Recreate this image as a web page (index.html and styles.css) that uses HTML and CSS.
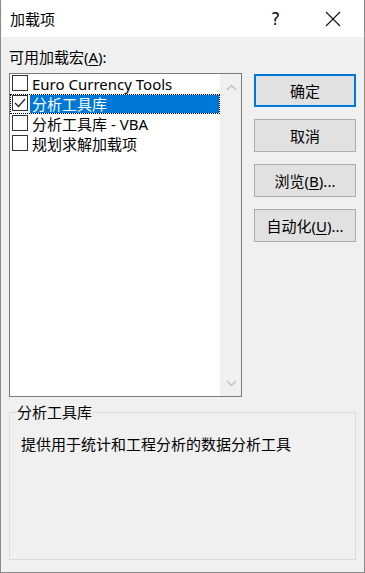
FILE: index.html
```html
<!DOCTYPE html>
<html lang="zh-CN">
<head>
<meta charset="utf-8">
<title>加载项</title>
<link rel="stylesheet" href="styles.css">
</head>
<body>
<div class="window">
  <div class="titlebar">
    <span class="title">加载项</span>
    <span class="help">?</span>
    <span class="close">
      <svg width="16" height="16" viewBox="0 0 16 16"><path d="M1 1 L15 15 M15 1 L1 15" stroke="#111" stroke-width="1.1" fill="none"/></svg>
    </span>
  </div>
  <div class="content">
    <div class="main">
      <div class="left">
        <div class="label">可用加载宏(<u>A</u>):</div>
        <div class="listbox">
          <div class="items">
            <div class="item"><span class="cb"></span><span class="text">Euro Currency Tools</span></div>
            <div class="item selected"><span class="cb"><svg width="14" height="14" viewBox="0 0 14 14"><polyline points="2,7 5.5,10.5 12,3" stroke="#222" stroke-width="1.2" fill="none"/></svg></span><span class="text">分析工具库</span></div>
            <div class="item"><span class="cb"></span><span class="text">分析工具库 - VBA</span></div>
            <div class="item"><span class="cb"></span><span class="text">规划求解加载项</span></div>
          </div>
          <div class="scrollbar">
            <svg width="11" height="7" viewBox="0 0 11 7"><polyline points="1,6 5.5,1.5 10,6" stroke="#c4c4c4" stroke-width="1.5" fill="none"/></svg>
            <svg width="11" height="7" viewBox="0 0 11 7"><polyline points="1,1 5.5,5.5 10,1" stroke="#c4c4c4" stroke-width="1.5" fill="none"/></svg>
          </div>
        </div>
      </div>
      <div class="buttons">
        <button class="btn default">确定</button>
        <button class="btn">取消</button>
        <button class="btn">浏览(<u>B</u>)...</button>
        <button class="btn">自动化(<u>U</u>)...</button>
      </div>
    </div>
    <fieldset class="group">
      <legend>分析工具库</legend>
      <p class="desc">提供用于统计和工程分析的数据分析工具</p>
    </fieldset>
  </div>
</div>
</body>
</html>
```
FILE: styles.css
```css
* { box-sizing: border-box; }
html, body {
  margin: 0;
  padding: 0;
  background: #f0f0f0;
}
body {
  font-family: "Noto Sans", "Noto Sans CJK SC", sans-serif;
  font-size: 15px;
  color: #000;
}
.window {
  width: 365px;
  height: 573px;
  background: #f0f0f0;
  border-left: 1px solid #8a8a8a;
  border-right: 1px solid #8a8a8a;
  border-bottom: 1px solid #8a8a8a;
  display: flex;
  flex-direction: column;
}
.titlebar {
  height: 37px;
  background: #fff;
  display: flex;
  align-items: center;
  padding-left: 9px;
}
.title {
  font-size: 15px;
  line-height: 20px;
  flex: 1;
}
.help {
  font-family: "DejaVu Sans", sans-serif;
  font-size: 17px;
  color: #111;
  margin-right: 45px;
  line-height: 20px;
}
.close {
  display: flex;
  margin-right: 23px;
}
.content {
  padding: 10px 8px 0 8px;
  display: flex;
  flex-direction: column;
}
.main {
  display: flex;
}
.left {
  width: 234px;
  display: flex;
  flex-direction: column;
}
.label {
  line-height: 20px;
  height: 20px;
}
u { text-underline-offset: 2px; }
.listbox {
  margin-top: 6px;
  height: 324px;
  border: 1px solid #7a7a7a;
  background: #fff;
  display: flex;
}
.items {
  width: 210px;
  display: flex;
  flex-direction: column;
}
.item {
  height: 20px;
  border: 1px dotted transparent;
  display: flex;
  align-items: flex-start;
}
.item.selected {
  border-color: #000;
}
.cb {
  width: 16px;
  height: 16px;
  margin-left: 1px;
  border: 1px solid #333;
  background: #fff;
  display: flex;
  align-items: center;
  justify-content: center;
  flex: none;
}
.text {
  margin-left: 2px;
  padding-left: 2px;
  line-height: 18px;
  height: 18px;
  white-space: nowrap;
}
.item.selected .text {
  flex: 1;
  background: #0078d7;
  color: #fff;
}
.scrollbar {
  margin-left: auto;
  width: 21px;
  background: #f0f0f0;
  display: flex;
  flex-direction: column;
  justify-content: space-between;
  align-items: center;
  padding: 10px 0 9px 1px;
}
.buttons {
  margin-left: 12px;
  margin-top: 27px;
  width: 102px;
  display: flex;
  flex-direction: column;
  gap: 12px;
}
.btn {
  height: 33px;
  width: 102px;
  background: #e1e1e1;
  border: 1px solid #adadad;
  font-family: "Noto Sans", "Noto Sans CJK SC", sans-serif;
  font-size: 15px;
  color: #000;
  padding: 0;
  line-height: 20px;
}
.btn.default {
  border: 2px solid #0078d7;
}
.group {
  margin: 5px 0 0 0;
  width: 347px;
  height: 158px;
  border: 1px solid #dcdcdc;
  padding: 0;
}
.group legend {
  margin-left: 7px;
  padding: 0;
  line-height: 20px;
}
.desc {
  margin: 12px 0 0 11px;
  line-height: 20px;
}
```
